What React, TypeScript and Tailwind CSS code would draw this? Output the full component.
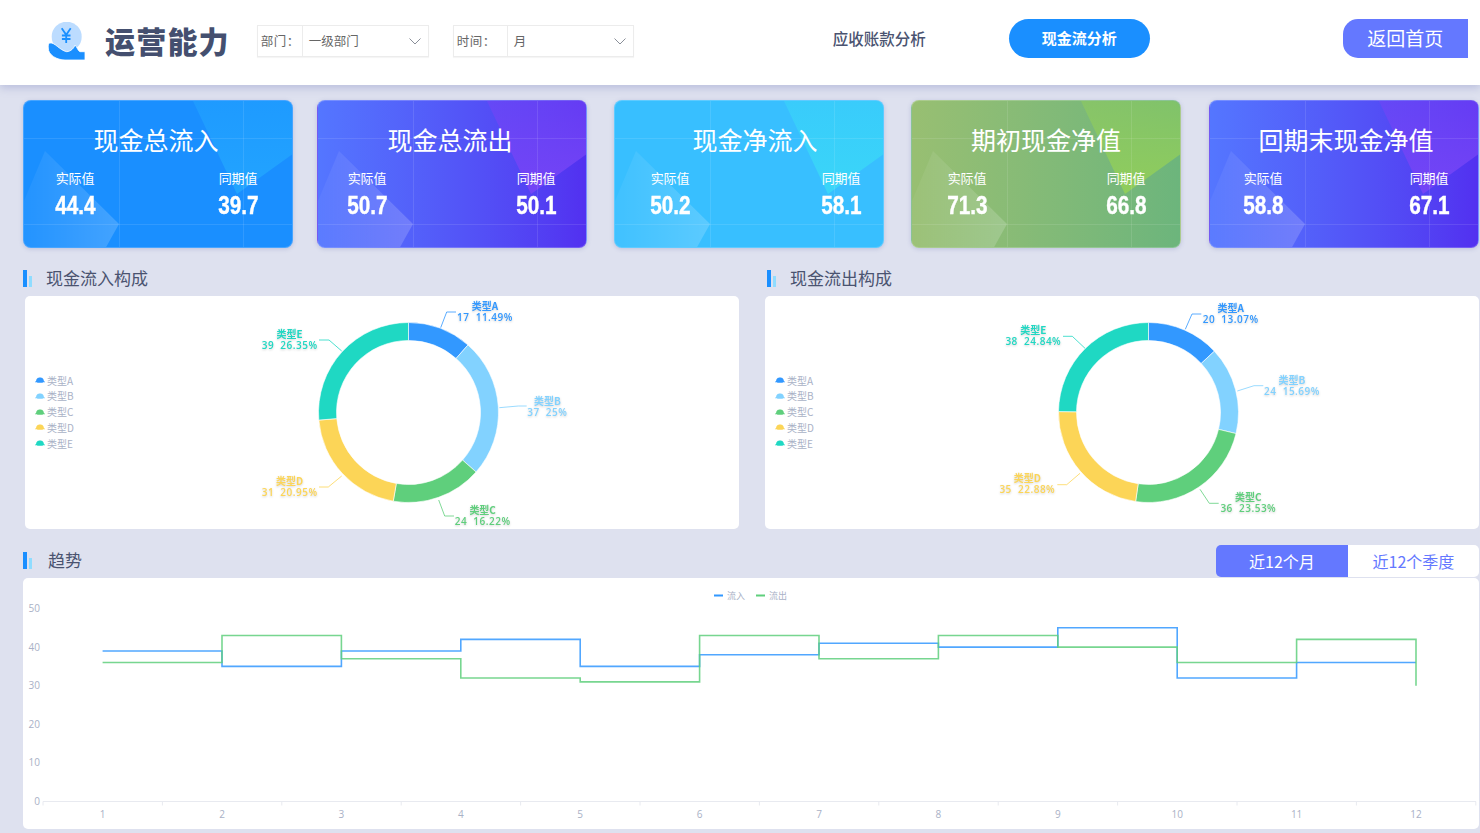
import React, { useId } from 'react';

const FONT = "font-['Noto_Sans_CJK_SC','Noto_Sans',sans-serif]";

/* ---------- KPI cards ---------- */
interface KpiCard {
  title: string;
  actual: string;
  last: string;
  bg: string;
  wedge: string;
  titleClass: string;
  rowClass: string;
  gapClass: string;
}

const CARDS: KpiCard[] = [
  { title: '现金总流入', actual: '44.4', last: '39.7', bg: 'bg-[#1a8fff]', wedge: '#22a4ff', titleClass: 'pr-[4px]', rowClass: 'pl-[31px] pr-[34px]', gapClass: '' },
  { title: '现金总流出', actual: '50.7', last: '50.1', bg: 'bg-gradient-to-r from-[#5476ff] to-[#5230f0]', wedge: '#7444f6', titleClass: 'pr-[4px]', rowClass: 'pl-[29px] pr-[30px]', gapClass: 'ml-[24px]' },
  { title: '现金净流入', actual: '50.2', last: '58.1', bg: 'bg-[#38bfff]', wedge: '#3ad6f8', titleClass: 'pl-[12px]', rowClass: 'pl-[35px] pr-[22px]', gapClass: 'ml-[27px]' },
  { title: '期初现金净值', actual: '71.3', last: '66.8', bg: 'bg-gradient-to-r from-[#98bf72] to-[#6cb57c]', wedge: '#90cd5c', titleClass: '', rowClass: 'pl-[35px] pr-[34px]', gapClass: 'ml-[27px]' },
  { title: '回期末现金净值', actual: '58.8', last: '67.1', bg: 'bg-gradient-to-r from-[#5476ff] to-[#5230f0]', wedge: '#7444f6', titleClass: 'pl-[4px]', rowClass: 'pl-[33px] pr-[29px]', gapClass: 'ml-[28px]' },
];

const CardDecor = ({ wedge }: { wedge: string }) => {
  const id = useId();
  return (
    <svg className="absolute inset-0" width="270" height="148" viewBox="0 0 270 148">
      <defs>
        <linearGradient id={`${id}w`} x1="0" y1="0" x2="0" y2="1">
          <stop offset="0" stopColor={wedge} stopOpacity="0.55" />
          <stop offset="1" stopColor={wedge} stopOpacity="1" />
        </linearGradient>
        <linearGradient id={`${id}s`} x1="0" y1="0" x2="1" y2="0">
          <stop offset="0" stopColor="#ffffff" stopOpacity="0.04" />
          <stop offset="1" stopColor="#ffffff" stopOpacity="0.18" />
        </linearGradient>
      </defs>
      <polygon points="169,0 270,0 270,52 213,93" fill={`url(#${id}w)`} />
      <polygon points="21,50 95,123 81,148 0,148 0,100" fill={`url(#${id}s)`} />
      <path d="M0 37.5H270M0 123.5H270M95.5 0V148M219.5 0V148" stroke="#ffffff" strokeOpacity="0.1" />
    </svg>
  );
};

const Card = ({ card }: { card: KpiCard }) => (
  <div className={`relative h-[148px] w-[270px] shrink-0 overflow-hidden rounded-[8px] border border-white/20 shadow-[0_1px_4px_rgba(90,100,170,0.25)] ${card.bg} ${card.gapClass}`}>
    <CardDecor wedge={card.wedge} />
    <div className="relative flex h-full flex-col text-white">
      <div className={`mt-[18px] text-center text-[25px] leading-[40px] ${card.titleClass}`}>{card.title}</div>
      <div className={`mt-[9px] flex justify-between ${card.rowClass}`}>
        <Stat label="实际值" value={card.actual} />
        <Stat label="同期值" value={card.last} />
      </div>
    </div>
  </div>
);

const Stat = ({ label, value }: { label: string; value: string }) => (
  <div className="flex w-[40px] flex-col items-center">
    <div className="whitespace-nowrap text-[13px] leading-[20px] tracking-[-0.2px]">{label}</div>
    <div className="mt-[3px] scale-x-[0.83] whitespace-nowrap font-['Liberation_Sans',sans-serif] text-[25px] font-bold leading-[28px] [-webkit-text-stroke:0.4px_white]">{value}</div>
  </div>
);

/* ---------- header ---------- */
const Logo = () => (
  <svg width="40" height="40" viewBox="0 0 40 40" className="mt-[22px] shrink-0">
    <circle cx="19.7" cy="14.7" r="15" fill="#bcdcff" />
    <path d="M14.7 6.3l4.5 6.5 4.5-6.5M19.2 12.8V21M14.9 13.5h8.6M14.9 17h8.6" fill="none" stroke="#1a8fff" strokeWidth="1.8" />
    <path d="M2.5 21C8 20 12 28 19.7 29.7 24 29.5 27 26 28 23 30 25 31 29 33 29.7H38V38H18C10 38 1 33 1.3 26 1 23 1.5 22 2.5 21Z" fill="#1a8fff" stroke="#ffffff" strokeWidth="0.8" />
  </svg>
);

const Chevron = () => (
  <svg width="12" height="7" viewBox="0 0 12 7" className="shrink-0">
    <path d="M0.5 0.5L6 6L11.5 0.5" fill="none" stroke="#8a8f99" strokeWidth="1" />
  </svg>
);

const Filter = ({ label, value, className }: { label: string; value: string; className: string }) => (
  <div className={`mt-[25px] flex h-[32px] border border-[#ececec] text-[12.5px] text-[#666666] shadow-[0_1px_1px_rgba(0,0,0,0.04)] ${className}`}>
    <div className="flex w-[45px] items-center border-r border-[#ececec] pl-[3px] tracking-[0.5px]">{label}</div>
    <div className="flex w-[125px] items-center justify-between pl-[6px] pr-[7px]">
      <span>{value}</span>
      <Chevron />
    </div>
  </div>
);

const Header = () => (
  <header className="relative z-10 flex h-[85px] items-start bg-white shadow-[0_3px_8px_rgba(120,130,190,0.35)]">
    <div className="ml-[47px] flex items-start">
      <Logo />
      <div className="ml-[18px] mt-[25px] text-[30px] font-black leading-none tracking-[1.2px] text-[#444f6f]">运营能力</div>
    </div>
    <Filter label="部门：" value="一级部门" className="ml-[27px]" />
    <Filter label="时间：" value="月" className="ml-[24px] [&>div:first-child]:w-[54px]" />
    <div className="ml-[199px] mt-[19px] flex h-[39px] w-[94px] items-center whitespace-nowrap text-[15.5px] font-medium text-[#4a5370]">应收账款分析</div>
    <button className="ml-[82px] mt-[19px] h-[39px] w-[141px] rounded-full bg-[#1a8fff] text-[15px] font-bold text-white">现金流分析</button>
    <button className="ml-[193px] mt-[19px] h-[39px] w-[125px] rounded-l-[15px] bg-[#6478ff] text-[19px] text-white">返回首页</button>
  </header>
);

const SectionTitle = ({ text, className }: { text: string; className: string }) => (
  <div className={`flex items-center ${className}`}>
    <div className="flex h-[17px] items-end gap-[2px]">
      <div className="h-[17px] w-[4px] bg-[#1a8fff]" />
      <div className="h-[11px] w-[3px] bg-[#8fdcff]" />
    </div>
    <div className="whitespace-nowrap text-[17px] leading-[24px] text-[#4a5370]">{text}</div>
  </div>
);

/* ---------- donut charts ---------- */
interface Slice {
  name: string;
  value: number;
  pct: number;
  color: string;
  line: number[];
  textX: number;
  y1: number;
  y2: number;
}

const BLUE = '#3298ff';
const SKY = '#82d2ff';
const GREEN = '#5fcf7c';
const YELLOW = '#fcd557';
const TEAL = '#1fd8c3';

// coordinates below were read from the 3x crops, so they are divided by 3 when drawn
const INFLOW: Slice[] = [
  { name: '类型A', value: 17, pct: 11.49, color: BLUE, line: [572, 95, 590, 48, 618, 48], textX: 705, y1: 33, y2: 65 },
  { name: '类型B', value: 37, pct: 25, color: SKY, line: [748, 335, 805, 330, 830, 330], textX: 892, y1: 318, y2: 350 },
  { name: '类型C', value: 24, pct: 16.22, color: GREEN, line: [566, 612, 584, 660, 612, 660], textX: 698, y1: 645, y2: 677 },
  { name: '类型D', value: 31, pct: 20.95, color: YELLOW, line: [275, 540, 235, 573, 207, 573], textX: 119, y1: 558, y2: 590 },
  { name: '类型E', value: 39, pct: 26.35, color: TEAL, line: [275, 165, 237, 132, 207, 132], textX: 119, y1: 117, y2: 149 },
];

const OUTFLOW: Slice[] = [
  { name: '类型A', value: 20, pct: 13.07, color: BLUE, line: [586, 100, 606, 54, 634, 54], textX: 722, y1: 39, y2: 71 },
  { name: '类型B', value: 24, pct: 15.69, color: SKY, line: [742, 285, 792, 269, 820, 269], textX: 906, y1: 255, y2: 287 },
  { name: '类型C', value: 36, pct: 23.53, color: GREEN, line: [630, 580, 658, 622, 686, 622], textX: 775, y1: 606, y2: 638 },
  { name: '类型D', value: 35, pct: 22.88, color: YELLOW, line: [270, 532, 230, 566, 202, 566], textX: 112, y1: 549, y2: 581 },
  { name: '类型E', value: 38, pct: 24.84, color: TEAL, line: [285, 157, 247, 121, 219, 121], textX: 130, y1: 105, y2: 137 },
];

const polar = (cx: number, cy: number, r: number, pct: number) => {
  const a = (pct / 100) * Math.PI * 2;
  return [cx + r * Math.sin(a), cy - r * Math.cos(a)];
};

const arcPath = (cx: number, cy: number, from: number, to: number) => {
  const [x1, y1] = polar(cx, cy, 90, from);
  const [x2, y2] = polar(cx, cy, 90, to);
  const [x3, y3] = polar(cx, cy, 72, to);
  const [x4, y4] = polar(cx, cy, 72, from);
  const big = to - from > 50 ? 1 : 0;
  return `M${x1} ${y1}A90 90 0 ${big} 1 ${x2} ${y2}L${x3} ${y3}A72 72 0 ${big} 0 ${x4} ${y4}Z`;
};

const Donut = ({ data }: { data: Slice[] }) => {
  const total = data.reduce((s, d) => s + d.pct, 0);
  let acc = 0;
  return (
    <svg width="340" height="233" viewBox="0 0 340 233" className="shrink-0">
      {data.map((d) => {
        const from = acc;
        acc += (d.pct / total) * 100;
        return <path key={d.name} d={arcPath(158.5, 116.5, from, acc)} fill={d.color} stroke="#ffffff" strokeWidth="0.6" />;
      })}
      {data.map((d) => (
        <g key={d.name} fill={d.color}>
          <polyline
            points={d.line.map((n) => (n / 3).toFixed(1)).join(' ')}
            fill="none"
            stroke={d.color}
            strokeWidth="0.8"
          />
          <g className="drop-shadow-[0_1px_1px_rgba(0,0,0,0.18)]" textAnchor="middle" fontSize="10">
            <text x={d.textX / 3} y={d.y1 / 3 + 3} fontWeight="700">{d.name}</text>
            <text x={d.textX / 3} y={d.y2 / 3 + 3.5} fontWeight="600" className="whitespace-pre font-['Open_Sans',sans-serif] tracking-[0.5px]">{`${d.value}  ${d.pct}%`}</text>
          </g>
        </g>
      ))}
    </svg>
  );
};

const PieLegend = ({ data }: { data: Slice[] }) => (
  <div className="mb-[2px] flex w-[225px] shrink-0 flex-col gap-[2.75px] pl-[10px]">
    {data.map((d) => (
      <div key={d.name} className="flex h-[13px] items-center gap-[2px] text-[10px] leading-[13px] text-[#a9b1c6]">
        <svg width="10" height="6" viewBox="0 0 10 6" className="shrink-0">
          <path d="M0 4.4H1C1.5 1.2 3 .6 5 .6S8.5 1.2 9 4.4H10V5.2H8L7.6 5.8H2.4L2 5.2H0Z" fill={d.color} />
        </svg>
        <span>{d.name}</span>
      </div>
    ))}
  </div>
);

const PiePanel = ({ data, className }: { data: Slice[]; className: string }) => (
  <div className={`flex h-[233px] w-[714px] shrink-0 items-center rounded-[5px] bg-white ${className}`}>
    <PieLegend data={data} />
    <Donut data={data} />
  </div>
);

/* ---------- trend chart ---------- */
const INFLOW_TREND = [39, 35, 39, 42, 35, 38, 41, 40, 45, 32, 36, 36];
const OUTFLOW_TREND = [36, 43, 37, 32, 31, 43, 37, 43, 40, 36, 42, 30];

const px = (i: number) => 79.6 + i * 119.4;
const py = (v: number) => 223.5 - v * 3.86;

const stepLine = (values: number[]) =>
  values
    .map((v, i) => (i === 0 ? `${px(0)},${py(v)}` : `${px(i)},${py(values[i - 1])} ${px(i)},${py(v)}`))
    .join(' ');

const TrendChart = () => (
  <svg width="1456" height="251" viewBox="0 0 1456 251" className="block" fontFamily="'Open Sans',sans-serif">
    <path d="M691 17.5h9" stroke="#3298ff" strokeWidth="2" />
    <text x="704" y="20.5" fontSize="9" fill="#a9b1c6" fontFamily="'Noto Sans CJK SC',sans-serif">流入</text>
    <path d="M733 17.5h9" stroke="#5fcf7c" strokeWidth="2" />
    <text x="746" y="20.5" fontSize="9" fill="#a9b1c6" fontFamily="'Noto Sans CJK SC',sans-serif">流出</text>

    {[0, 10, 20, 30, 40, 50].map((v) => (
      <text key={v} x="17" y={py(v) + 3.5} textAnchor="end" fontSize="10" fill="#a9b1c6">{v}</text>
    ))}
    <path d="M20 223.5H1453" stroke="#e8eaf0" strokeWidth="1" />
    {Array.from({ length: 13 }, (_, i) => (
      <path key={i} d={`M${20 + i * 119.4} 223.5v4`} stroke="#e8eaf0" strokeWidth="1" />
    ))}
    {INFLOW_TREND.map((_, i) => (
      <text key={i} x={px(i)} y="240" textAnchor="middle" fontSize="10" fill="#a9b1c6">{i + 1}</text>
    ))}

    <polyline points={stepLine(INFLOW_TREND)} fill="none" stroke="#3298ff" strokeOpacity="0.85" strokeWidth="1.6" />
    <polyline points={stepLine(OUTFLOW_TREND)} fill="none" stroke="#5fcf7c" strokeOpacity="0.85" strokeWidth="1.6" />
  </svg>
);

export default function App() {
  return (
    <div className={`h-[833px] w-[1480px] overflow-hidden bg-[#dee1ef] ${FONT}`}>
      <Header />

      <div className="mt-[15px] flex pl-[23px]">
        {CARDS.map((c) => (
          <Card key={c.title} card={c} />
        ))}
      </div>

      {/* composition */}
      <div className="mt-[18px] flex h-[24px]">
        <SectionTitle text="现金流入构成" className="ml-[23px] w-[744px] [&>div:last-child]:ml-[14px]" />
        <SectionTitle text="现金流出构成" className="[&>div:last-child]:ml-[14px]" />
      </div>
      <div className="mt-[6px] flex">
        <PiePanel data={INFLOW} className="ml-[25px]" />
        <PiePanel data={OUTFLOW} className="ml-[26px]" />
      </div>

      {/* trend */}
      <div className="mt-[16px] flex h-[32px] items-center justify-between pl-[23px]">
        <SectionTitle text="趋势" className="mb-[2px] [&>div:last-child]:ml-[16px]" />
        <div className="mr-[1px] flex h-[32px] text-[16px]">
          <div className="flex w-[132px] items-center justify-center rounded-l-[5px] bg-[#6478ff] text-white">近12个月</div>
          <div className="flex w-[131px] items-center justify-center rounded-r-[5px] bg-white text-[#6478ff]">近12个季度</div>
        </div>
      </div>
      <div className="ml-[23px] mt-[1px] h-[251px] w-[1456px] overflow-hidden rounded-[5px] bg-white">
        <TrendChart />
      </div>
    </div>
  );
}
